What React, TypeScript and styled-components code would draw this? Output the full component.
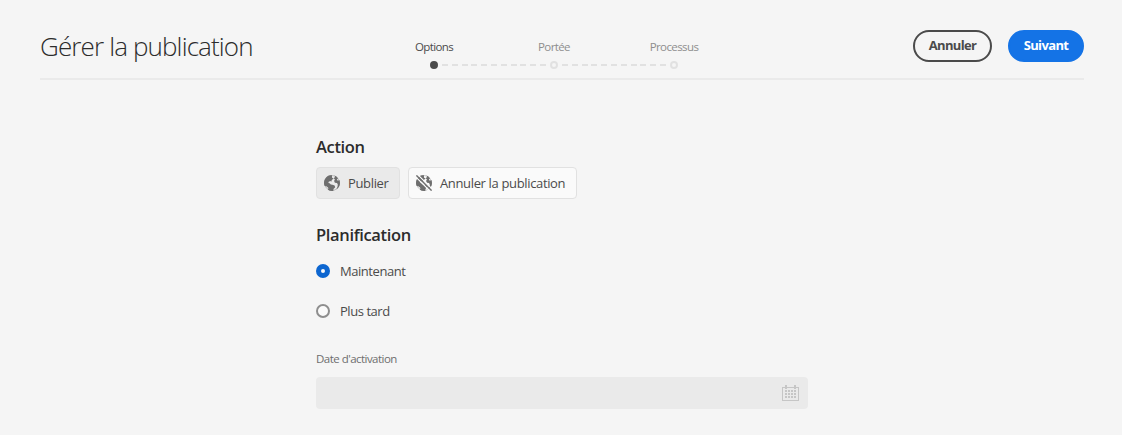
import React, { useState } from 'react';
import styled, { createGlobalStyle, css } from 'styled-components';

const GlobalStyle = createGlobalStyle`
  * { box-sizing: border-box; }
  body {
    margin: 0;
    background: #f5f5f5;
    color: #4b4b4b;
    font-family: "Open Sans", "Noto Sans", sans-serif;
  }
  button { font: inherit; color: inherit; cursor: pointer; }
`;

const Page = styled.div`
  height: 435px;
  padding: 0 38px 0 40px;
  overflow: hidden;
`;

const Header = styled.header`
  display: grid;
  grid-template-columns: 334px 1fr auto;
  height: 80px;
  border-bottom: 2px solid #eaeaea;
`;

const Title = styled.h1`
  margin: 27px 0 0;
  font-size: 26px;
  font-weight: 300;
  line-height: 38px;
  letter-spacing: -0.87px;
  white-space: nowrap;
  color: #2c2c2c;
`;

const Steps = styled.ol`
  display: flex;
  margin: 38px 0 0;
  padding: 0;
  list-style: none;
`;

const Step = styled.li<{ $active?: boolean }>`
  display: flex;
  flex-direction: column;
  align-items: center;
  width: 120px;
  font-size: 11.5px;
  line-height: 18px;
  letter-spacing: -0.6px;
  color: ${(p) => (p.$active ? '#4b4b4b' : '#8e8e8e')};
`;

const Track = styled.div`
  display: grid;
  grid-template-columns: minmax(0, 1fr) 8px minmax(0, 1fr);
  align-items: center;
  width: 120px;
  height: 8px;
  margin-top: 5px;
`;

const Marker = styled.span<{ $active?: boolean }>`
  grid-column: 2;
  width: 8px;
  height: 8px;
  border: 2px solid ${(p) => (p.$active ? '#4b4b4b' : '#e1e1e1')};
  border-radius: 50%;
  background: ${(p) => (p.$active ? '#4b4b4b' : '#f5f5f5')};
`;

const Dashes = styled.span`
  grid-column: 3;
  width: 104px;
  height: 2px;
  margin-left: 4px;
  background: repeating-linear-gradient(90deg, #e1e1e1 0 6px, transparent 6px 9.8px);
`;

const Actions = styled.div`
  display: flex;
  gap: 16px;
  margin-top: 30px;
`;

const PillButton = styled.button<{ $primary?: boolean }>`
  height: 32px;
  width: ${(p) => (p.$primary ? 76 : 79)}px;
  padding: 0 0 2px;
  border: 2px solid ${(p) => (p.$primary ? '#1473e6' : '#4b4b4b')};
  border-radius: 16px;
  background: ${(p) => (p.$primary ? '#1473e6' : 'transparent')};
  color: ${(p) => (p.$primary ? '#fff' : '#4b4b4b')};
  font-size: 13px;
  font-weight: 700;
  line-height: 26px;
  letter-spacing: -0.65px;
`;

const Form = styled.main`
  width: 492px;
  margin-left: 276px;
  padding-top: 55px;
`;

const SectionTitle = styled.h2`
  margin: 0;
  font-size: 16.5px;
  font-weight: 600;
  line-height: 23px;
  letter-spacing: -0.35px;
  color: #2c2c2c;
`;

const ActionRow = styled.div`
  display: flex;
  gap: 8px;
  margin: 9px 0 24px;
`;

const ActionButton = styled.button<{ $selected?: boolean; $width: number }>`
  display: flex;
  align-items: center;
  gap: 8px;
  width: ${(p) => p.$width}px;
  height: 32px;
  padding: 0 7px;
  border: 1px solid #e1e1e1;
  border-radius: 4px;
  background: ${(p) => (p.$selected ? '#eaeaea' : '#fafafa')};
  font-size: 13px;
  letter-spacing: -0.35px;
  white-space: nowrap;
`;

const Radio = styled.label`
  display: flex;
  align-items: center;
  gap: 10px;
  height: 40px;
  font-size: 13px;
  letter-spacing: -0.45px;
  cursor: pointer;
`;

const RadioInput = styled.input`
  appearance: none;
  width: 14px;
  height: 14px;
  margin: 0;
  border: 2px solid #8e8e8e;
  border-radius: 50%;
  background: #fafafa;
  ${(p) => p.checked && css`border: 5px solid #0d66d0;`}
`;

const Options = styled.div`
  margin-top: 5px;
`;

const FieldLabel = styled.div`
  margin-top: 19px;
  font-size: 11.5px;
  line-height: 18px;
  letter-spacing: -0.53px;
  color: #6e6e6e;
`;

const DateField = styled.div`
  display: flex;
  align-items: center;
  justify-content: flex-end;
  height: 32px;
  margin-top: 9px;
  padding-right: 9px;
  border-radius: 4px;
  background: #eaeaea;
`;

const Globe = ({ off }: { off?: boolean }) => (
  <svg width="16" height="16" viewBox="0 0 16 16">
    <circle cx="8" cy="8" r="7.500" fill="none" stroke="#6e6e6e" strokeWidth="0.800" strokeOpacity="0.450" />
    <path fill="#6e6e6e" d="M7.800 0C3.500 0 0 3.500 0 8c0 1 .2 1.900.5 2.700l2.300.7 1.600 1.700-.5 1.700C5.100 15.600 6.500 16 8 16h1.300l.2-1.900 1.700-1.800-.6-1.700-2.200-.8-1.600-.2-1.200-1.400-1.200-.2.300-1.300 1.700-.6.900.6.500-1.600 1.800-1.600-1.500-.8L7.800 0z" />
    <path fill="#6e6e6e" d="M10.500.500l.6 1.400-1.500 1.400 1.300 1-.8 1.800.8 1.700 2.100.2.800 1.600-.3 2.200-1.100 2.700C14.500 13.100 16 10.700 16 8c0-1-.2-2-.6-2.900l-1.500.6-1-.9 1.100-1.600C13 1.900 11.900 1 10.500.500z" />
    {off && (
      <>
        <path d="M-.4 1.600 14.400 16.400M1.600-.4 16.400 14.400" stroke="#fafafa" strokeWidth="1.300" />
        <path d="M.4.400 15.600 15.600" stroke="#6e6e6e" strokeWidth="1.400" />
      </>
    )}
  </svg>
);

const Calendar = () => (
  <svg width="17" height="16" viewBox="0 0 17 16" fill="#c6c6c6" shapeRendering="crispEdges">
    <path d="M0 2h3V0h2v2h7V0h2v2h3v14H0zM1 3v12h15V3h-2v1h-2V3H5v1H3V3z" fillRule="evenodd" />
    {[5, 8, 11].map((y) =>
      [3, 6, 9, 12].map((x) => <rect key={`${x}-${y}`} x={x} y={y} width="2" height="2" />)
    )}
  </svg>
);

const steps = ['Options', 'Portée', 'Processus'];

export default function App() {
  const [when, setWhen] = useState('now');
  return (
    <>
      <GlobalStyle />
      <Page>
        <Header>
          <Title>Gérer la publication</Title>
          <Steps>
            {steps.map((name, i) => (
              <Step key={name} $active={i === 0}>
                {name}
                <Track>
                  <Marker $active={i === 0} />
                  {i < steps.length - 1 && <Dashes />}
                </Track>
              </Step>
            ))}
          </Steps>
          <Actions>
            <PillButton>Annuler</PillButton>
            <PillButton $primary>Suivant</PillButton>
          </Actions>
        </Header>
        <Form>
          <SectionTitle>Action</SectionTitle>
          <ActionRow>
            <ActionButton $selected $width={84}><Globe />Publier</ActionButton>
            <ActionButton $width={169}><Globe off />Annuler la publication</ActionButton>
          </ActionRow>
          <SectionTitle>Planification</SectionTitle>
          <Options>
            <Radio>
              <RadioInput type="radio" name="when" checked={when === 'now'} onChange={() => setWhen('now')} />
              Maintenant
            </Radio>
            <Radio>
              <RadioInput type="radio" name="when" checked={when === 'later'} onChange={() => setWhen('later')} />
              Plus tard
            </Radio>
          </Options>
          <FieldLabel>Date d'activation</FieldLabel>
          <DateField><Calendar /></DateField>
        </Form>
      </Page>
    </>
  );
}
